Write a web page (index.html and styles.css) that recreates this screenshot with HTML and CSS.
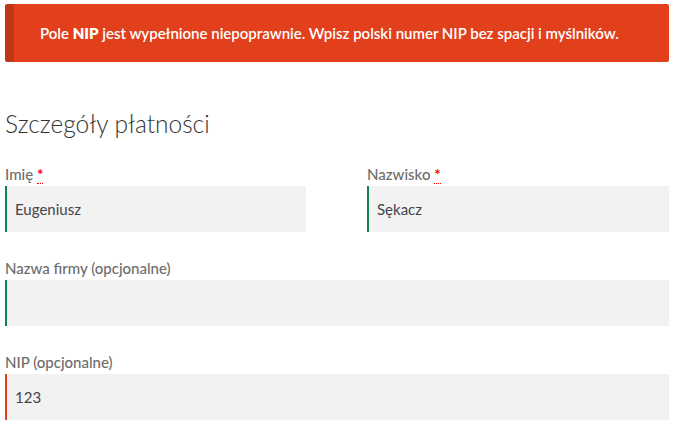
FILE: index.html
```html
<!DOCTYPE html>
<html lang="pl">
<head>
    <meta charset="UTF-8">
    <meta name="viewport" content="width=device-width, initial-scale=1.0">
    <title>Szczegóły płatności</title>
    <link rel="stylesheet" href="styles.css">
</head>
<body>
    <div class="page">
        <ul class="notice-error">
            <li>Pole <strong>NIP</strong> jest wypełnione niepoprawnie. Wpisz polski numer NIP bez spacji i myślników.</li>
        </ul>

        <h3 class="billing-title">Szczegóły płatności</h3>

        <div class="fields">
            <p class="field half">
                <label for="first_name">Imię <abbr class="required" title="wymagane">*</abbr></label>
                <input type="text" id="first_name" class="valid" value="Eugeniusz">
            </p>
            <p class="field half">
                <label for="last_name">Nazwisko <abbr class="required" title="wymagane">*</abbr></label>
                <input type="text" id="last_name" class="valid" value="Sękacz">
            </p>
            <p class="field wide">
                <label for="company">Nazwa firmy (opcjonalne)</label>
                <input type="text" id="company" class="valid" value="">
            </p>
            <p class="field wide">
                <label for="nip">NIP (opcjonalne)</label>
                <input type="text" id="nip" class="invalid" value="123">
            </p>
        </div>
    </div>
</body>
</html>
```

FILE: styles.css
```css
body {
    margin: 0;
    padding: 0;
    background: #fff;
    font-family: Lato, "Open Sans", sans-serif;
    color: #6d6d6d;
    font-size: 15px;
}
.page {
    padding: 4px 5px 0 5px;
}
.notice-error {
    list-style: none;
    margin: 0;
    padding: 0 20px 0 26px;
    height: 58px;
    display: flex;
    align-items: center;
    background-color: #e2401c;
    border-left: 9px solid rgba(0, 0, 0, 0.15);
    border-radius: 2px;
    color: #fff;
    font-size: 15px;
    font-weight: 600;
}
.notice-error strong {
    font-weight: 800;
}
.billing-title {
    margin: 46px 0 0 0;
    font-size: 24.5px;
    font-weight: 300;
    color: #333;
    line-height: 32px;
}
.fields {
    display: grid;
    grid-template-columns: 301px 302px;
    column-gap: 61px;
    margin-top: 22px;
}
.field {
    margin: 0 0 24px 0;
}
.wide {
    grid-column: 1 / span 2;
}
label {
    display: block;
    line-height: 24px;
    height: 24px;
    font-size: 15px;
    font-weight: 500;
}
.required {
    color: red;
    text-decoration: none;
    border-bottom: 1px dotted red;
    font-weight: 700;
}
input {
    display: block;
    width: 100%;
    height: 46px;
    box-sizing: border-box;
    border: 0;
    border-left: 2px solid #0f834d;
    background-color: #f2f2f2;
    padding: 0 8px;
    font-family: Lato, "Open Sans", sans-serif;
    font-size: 15px;
    color: #43454b;
    outline: none;
}
input.invalid {
    border-left-color: #e2401c;
}
```
